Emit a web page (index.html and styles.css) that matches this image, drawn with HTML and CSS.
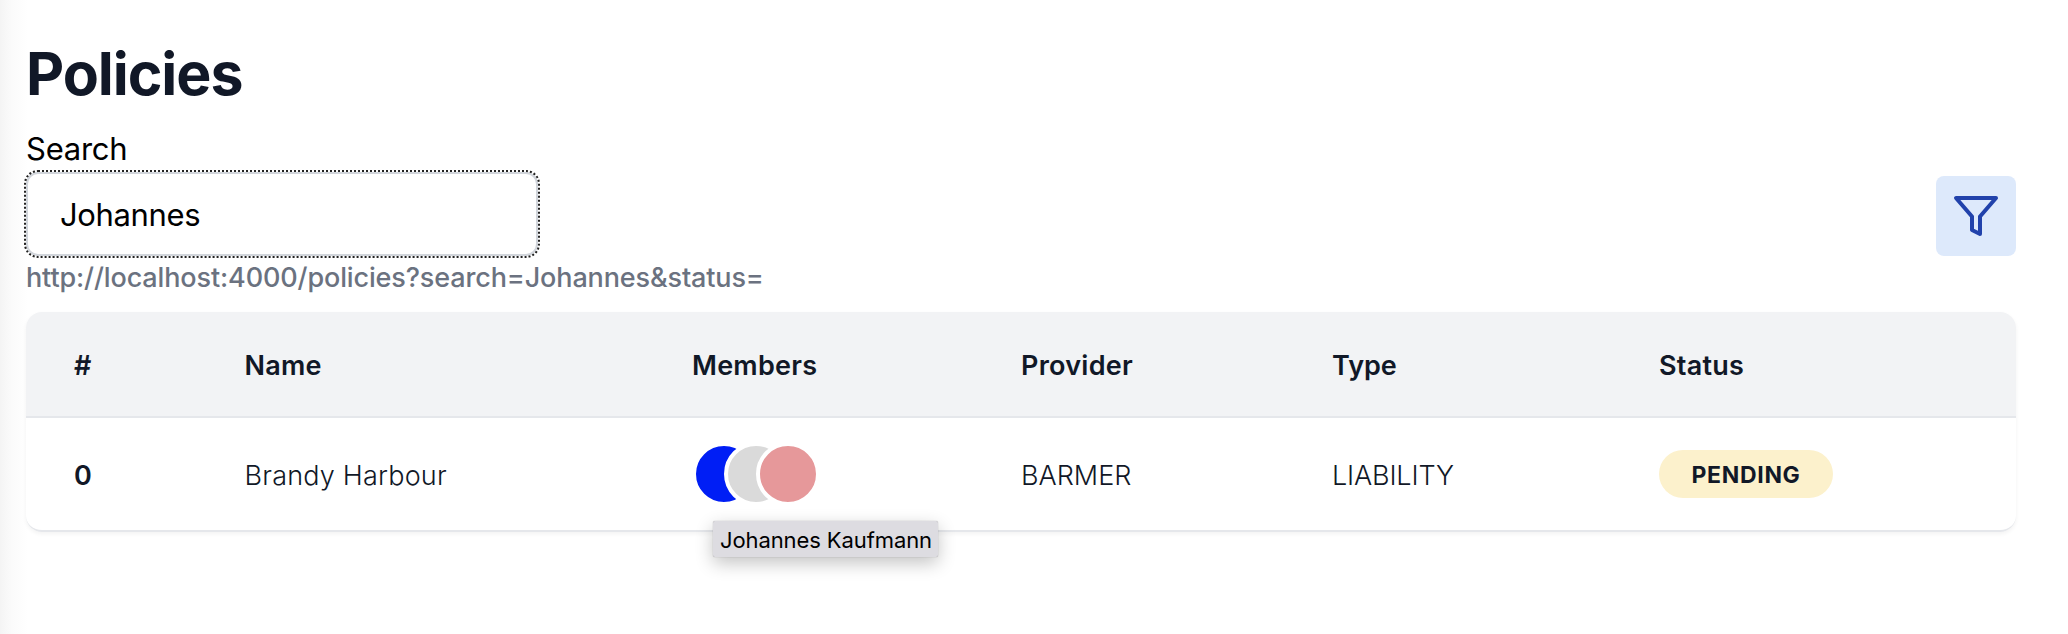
FILE: index.html
```html
<!DOCTYPE html>
<html lang="en">
<head>
<meta charset="utf-8">
<title>Policies</title>
<link rel="stylesheet" href="styles.css">
</head>
<body>
<main class="page">
  <h1 class="title">Policies</h1>
  <div class="toolbar">
    <div class="search">
      <label class="search-label" for="search">Search</label>
      <input class="search-input" id="search" type="text" value="Johannes">
    </div>
    <button class="filter" type="button" aria-label="Filter">
      <svg class="filter-icon" viewBox="0 0 80 80" fill="none" stroke="currentColor" stroke-width="4" stroke-linejoin="round"><path d="M20 22H60L44 40.5V58L36 54V40.5Z"/></svg>
    </button>
  </div>
  <p class="url">http://localhost:4000/policies?search=Johannes&amp;status=</p>
  <section class="table">
    <div class="row head">
      <span>#</span><span class="text">Name</span><span class="text">Members</span><span class="text">Provider</span><span>Type</span><span class="text">Status</span>
    </div>
    <div class="row body">
      <span class="cell strong">0</span>
      <span class="cell name">Brandy Harbour</span>
      <div class="members">
        <i class="avatar blue"></i><i class="avatar gray"></i><i class="avatar pink"></i>
        <div class="tooltip">Johannes Kaufmann</div>
      </div>
      <span class="cell">BARMER</span>
      <span class="cell type">LIABILITY</span>
      <span class="badge">PENDING</span>
    </div>
  </section>
</main>
</body>
</html>
```
FILE: styles.css
```css
* { box-sizing: border-box; }
body {
  margin: 0;
  background: #fff;
  font-family: Inter, "Liberation Sans", sans-serif;
  color: #111827;
}
.page {
  height: 634px;
  padding: 38px 52px 0 26px;
  background: linear-gradient(to right, #f4f4f4, #fbfbfb 12px, #fff 28px);
}
.title {
  margin: 0;
  font-size: 59px;
  line-height: 72px;
  font-weight: 700;
  letter-spacing: -1.05px;
}
.toolbar {
  display: flex;
  justify-content: space-between;
  align-items: flex-end;
  height: 146px;
}
.search { display: flex; flex-direction: column; color: #000; }
.search-label { font-size: 31px; line-height: 46px; letter-spacing: -0.25px; }
.search-input {
  width: 512px;
  height: 84px;
  padding: 0 32px;
  border: 2px solid #d1d5db;
  border-radius: 12px;
  outline: 2px dotted #222;
  outline-offset: 0;
  background: #fff;
  color: #000;
  font: 400 31px Inter, sans-serif;
  letter-spacing: -0.35px;
}
.filter {
  width: 80px;
  height: 80px;
  padding: 0;
  border: 0;
  border-radius: 8px;
  background: #dde9fb;
  color: #2142ab;
}
.filter-icon { display: block; width: 80px; height: 80px; }
.url {
  margin: 0;
  height: 56px;
  font-size: 27px;
  line-height: 44px;
  font-weight: 500;
  letter-spacing: -0.13px;
  color: #6b7280;
}
.table {
  height: 220px;
  border-radius: 16px;
  box-shadow: 0 2px 4px rgba(0, 0, 0, 0.05);
}
.row {
  display: grid;
  grid-template-columns: 170.5px 447.5px 329px 311px 327px 1fr;
  align-items: center;
  padding-left: 48px;
  border-bottom: 2px solid #e5e7eb;
  font-size: 27px;
  white-space: nowrap;
}
.head {
  height: 106px;
  padding-top: 2px;
  border-radius: 16px 16px 0 0;
  background: #f2f3f5;
  font-weight: 570;
}
.text { letter-spacing: 0.25px; }
.body {
  height: 114px;
  border-radius: 0 0 16px 16px;
  background: #fff;
  font-weight: 350;
}
.cell { padding-top: 2px; }
.name { letter-spacing: 0.2px; }
.type { letter-spacing: -0.15px; }
.strong { font-weight: 600; }
.members { position: relative; display: flex; }
.avatar {
  width: 64px;
  height: 64px;
  border: 4px solid #fff;
  border-radius: 50%;
}
.avatar + .avatar { margin-left: -32px; }
.blue { background: #001ef5; }
.gray { background: #dadada; }
.pink { background: #e6989a; }
.tooltip {
  position: absolute;
  left: 21px;
  top: 79px;
  width: 225px;
  height: 36px;
  padding-left: 7px;
  border-radius: 2px;
  background: #dddce1;
  box-shadow: 0 0 1px rgba(0, 0, 0, 0.4), 0 6px 18px rgba(0, 0, 0, 0.24);
  font-size: 22px;
  line-height: 38px;
  font-weight: 400;
  letter-spacing: -0.1px;
  color: #000;
}
.badge {
  display: flex;
  align-items: center;
  justify-content: center;
  width: 174px;
  height: 48px;
  padding-top: 1px;
  border-radius: 24px;
  background: #fcf1cc;
  font-size: 23px;
  font-weight: 650;
  letter-spacing: 0.7px;
}
```
